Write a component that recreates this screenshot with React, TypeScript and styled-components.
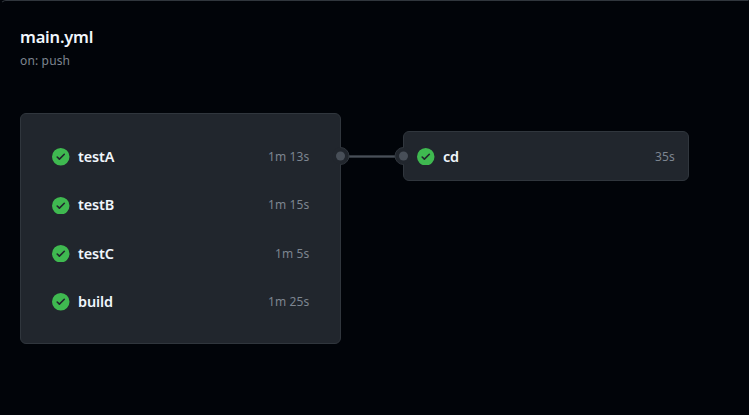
import React from "react";
import styled, { createGlobalStyle } from "styled-components";

const GlobalStyle = createGlobalStyle`
  * { box-sizing: border-box; }
  body {
    margin: 0;
    background: #010409;
    font-family: "Noto Sans", "Open Sans", sans-serif;
  }
`;

const Page = styled.main`
  height: 415px;
  padding: 25px 19px 0;
  border: 1px solid transparent;
  border-top-color: #30363d;
  border-top-left-radius: 6px;
  overflow: hidden;
`;

const Title = styled.h1`
  margin: 0;
  font-size: 16.5px;
  line-height: 22px;
  font-weight: 600;
  letter-spacing: -0.2px;
  color: #f0f6fc;
`;

const Trigger = styled.p`
  margin: 4px 0 0;
  font-size: 12px;
  line-height: 18px;
  letter-spacing: 0.15px;
  color: #7d8590;
`;

const Graph = styled.div`
  display: flex;
  align-items: flex-start;
  margin-top: 43px;
`;

const Card = styled.section<{ $width: number; $padding: string; $top?: number }>`
  position: relative;
  width: ${(p) => p.$width}px;
  margin-top: ${(p) => p.$top ?? 0}px;
  padding: ${(p) => p.$padding};
  border: 1px solid #30363d;
  border-radius: 6px;
  background: #21262d;
`;

const Job = styled.div<{ $height: number }>`
  display: flex;
  align-items: center;
  height: ${(p) => p.$height}px;
`;

const JobName = styled.span`
  flex: 1;
  margin-left: 8.5px;
  font-size: 14.4px;
  line-height: 20px;
  font-weight: 600;
  letter-spacing: -0.1px;
  color: #f0f6fc;
`;

const Duration = styled.span`
  font-size: 12px;
  line-height: 20px;
  letter-spacing: 0.15px;
  color: #7d8590;
`;

const Port = styled.svg<{ $side: "left" | "right"; $top: number }>`
  position: absolute;
  top: ${(p) => p.$top}px;
  ${(p) => p.$side}: -11px;
  width: 21px;
  height: 20px;
`;

const Connector = styled.div`
  width: 62px;
  height: 3px;
  margin-top: 42px;
  border: solid #30363d;
  border-width: 1px 0;
  background: #484f58;
`;

const CheckIcon = () => (
  <svg width="17.5" height="17.5" viewBox="0 0 16 16" fill="#3fb950" aria-hidden="true">
    <path
      fillRule="evenodd"
      d="M8 16A8 8 0 1 0 8 0a8 8 0 0 0 0 16Zm3.78-9.72a.75.75 0 0 0-1.06-1.06L6.75 9.19 5.28 7.72a.75.75 0 0 0-1.06 1.06l2 2a.75.75 0 0 0 1.06 0l4.5-4.5Z"
    />
  </svg>
);

const GraphPort = ({ side, top }: { side: "left" | "right"; top: number }) => (
  <Port $side={side} $top={top} viewBox="0 0 21 20" aria-hidden="true">
    <circle cx="10.5" cy="10" r="8.5" fill="#21262d" />
    <path
      d={side === "right" ? "M10.5 1.5a8.5 8.5 0 0 1 0 17" : "M10.5 1.5a8.5 8.5 0 0 0 0 17"}
      fill="none"
      stroke="#30363d"
    />
    <circle cx="10.5" cy="10" r="4.5" fill="#484f58" />
  </Port>
);

const JobRow = ({ name, time, height = 48.4 }: { name: string; time: string; height?: number }) => (
  <Job $height={height}>
    <CheckIcon />
    <JobName>{name}</JobName>
    <Duration>{time}</Duration>
  </Job>
);

const jobs = [
  { name: "testA", time: "1m 13s" },
  { name: "testB", time: "1m 15s" },
  { name: "testC", time: "1m 5s" },
  { name: "build", time: "1m 25s" },
];

export default function App() {
  return (
    <>
      <GlobalStyle />
      <Page>
        <Title>main.yml</Title>
        <Trigger>on: push</Trigger>
        <Graph>
          <Card $width={321} $padding="18.7px 30.5px 16.7px 31px">
            {jobs.map((job) => (
              <JobRow key={job.name} {...job} />
            ))}
            <GraphPort side="right" top={32} />
          </Card>
          <Connector />
          <Card $width={286} $padding="1px 13px 0" $top={18}>
            <JobRow name="cd" time="35s" height={47} />
            <GraphPort side="left" top={14} />
          </Card>
        </Graph>
      </Page>
    </>
  );
}
